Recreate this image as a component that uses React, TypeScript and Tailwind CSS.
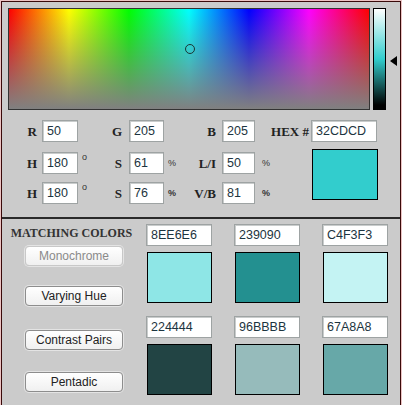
import React from 'react';

const serif = "font-['Liberation_Serif',serif] font-bold text-[13px] text-[#222]";
const sans = "font-['Liberation_Sans',Arial,sans-serif]";

function Field({ value, w }: { value: string; w: string }) {
    return (
        <div
            className={`${w} h-[22px] bg-white border border-[#9ea3a3] shadow-[inset_1px_1px_0_#c9cccc] flex items-center pl-[4px] ${sans} text-[12.5px] text-[#1c3440] leading-none`}
        >
            {value}
        </div>
    );
}

function Label({ text, w, pr = 'pr-[5px]' }: { text: string; w: string; pr?: string }) {
    return <div className={`${w} ${pr} text-right ${serif} leading-none`}>{text}</div>;
}

function Unit({ text, bold, sup }: { text: string; bold?: boolean; sup?: boolean }) {
    return (
        <div className="w-[20px] self-stretch flex">
            <span
                className={`pl-[4px] ${sans} ${sup ? 'text-[9px] mt-[1px]' : 'text-[9px] self-center'} ${bold ? 'font-bold' : ''} text-[#333] leading-none`}
            >
                {text}
            </span>
        </div>
    );
}

function Btn({ label, disabled, mt }: { label: string; disabled?: boolean; mt: string }) {
    return (
        <button
            className={`${mt} w-[98px] h-[20px] rounded-[4px] border ${disabled ? 'border-[#c8c8c8] text-[#8a8a8a]' : 'border-[#8d8d8d] text-[#222]'} bg-[linear-gradient(to_bottom,#ffffff,#f0f0f0)] shadow-[0_0_0_1px_#e4e4e4] ${sans} text-[12px] leading-none`}
        >
            {label}
        </button>
    );
}

function Swatch({ hex }: { hex: string }) {
    return (
        <div className="flex flex-col gap-[6px]">
            <Field value={hex} w="w-[66px]" />
            <div className="w-[65px] h-[51px] ml-[1px] border border-black" style={{ backgroundColor: `#${hex}` }} />
        </div>
    );
}

export default function App() {
    return (
        <div className="w-[402px] h-[405px] border-l border-t border-r border-[#ecc4c4] overflow-hidden">
            <div className="w-full h-full border-l border-t border-r border-[#3a0a0a] bg-[#cbcbcb]">
                {/* Picker */}
                <div className="flex pl-[6px] pt-[6px] gap-[3px]">
                    <div className="relative w-[362px] h-[102px] border border-[#333] bg-[linear-gradient(to_bottom,rgba(128,128,128,0),#808080),linear-gradient(to_right,#f00,#ff0,#0f0,#0ff,#00f,#f0f,#f00)]">
                        <div className="absolute left-[176px] top-[35px] w-[10px] h-[10px] rounded-full border-[1.5px] border-[#1b3535]" />
                    </div>
                    <div className="w-[13px] h-[102px] border border-black bg-[linear-gradient(to_bottom,#fff,#32cdcd_50%,#000_96%)]" />
                    <svg width="7" height="10" viewBox="0 0 7 10" className="mt-[48px] ml-[1px]">
                        <polygon points="7,0 7,10 0,5" fill="#000" />
                    </svg>
                </div>

                {/* Values */}
                <div className="flex items-center mt-[10px] h-[22px]">
                    <Label text="R" w="w-[40px]" />
                    <Field value="50" w="w-[36px]" />
                    <div className="w-[20px]" />
                    <Label text="G" w="w-[31px]" pr="pr-[7px]" />
                    <Field value="205" w="w-[35px]" />
                    <div className="w-[20px]" />
                    <Label text="B" w="w-[38px]" pr="pr-[6px]" />
                    <Field value="205" w="w-[33px]" />
                    <Label text="HEX #" w="w-[56px]" pr="pr-[2px]" />
                    <Field value="32CDCD" w="w-[66px]" />
                </div>

                <div className="flex mt-[7px]">
                    <div className="flex flex-col pt-[3px] gap-[8px] w-[310px]">
                        <div className="flex items-center h-[22px]">
                            <Label text="H" w="w-[40px]" />
                            <Field value="180" w="w-[36px]" />
                            <Unit text="o" sup />
                            <Label text="S" w="w-[31px]" pr="pr-[7px]" />
                            <Field value="61" w="w-[35px]" />
                            <Unit text="%" />
                            <Label text="L/I" w="w-[38px]" pr="pr-[6px]" />
                            <Field value="50" w="w-[33px]" />
                            <div className="w-[20px] self-stretch flex">
                                <span className={`pl-[7px] self-center ${sans} text-[9px] text-[#333] leading-none`}>%</span>
                            </div>
                        </div>
                        <div className="flex items-center h-[22px]">
                            <Label text="H" w="w-[40px]" />
                            <Field value="180" w="w-[36px]" />
                            <Unit text="o" sup />
                            <Label text="S" w="w-[31px]" pr="pr-[7px]" />
                            <Field value="76" w="w-[35px]" />
                            <Unit text="%" bold />
                            <Label text="V/B" w="w-[38px]" pr="pr-[6px]" />
                            <Field value="81" w="w-[33px]" />
                            <div className="w-[20px] self-stretch flex">
                                <span className={`pl-[7px] self-center ${sans} font-bold text-[9px] text-[#333] leading-none`}>%</span>
                            </div>
                        </div>
                    </div>
                    <div className="w-[66px] h-[51px] border border-black bg-[#32cdcd]" />
                </div>

                {/* Divider */}
                <div className="mt-[13px] h-[2px] bg-[#2a2a2a]" />

                {/* Matching colors */}
                <div className="flex">
                    <div className="w-[144px] flex flex-col items-center">
                        <div className="mt-[8px] ml-[-5px] font-['Liberation_Serif',serif] font-bold text-[12px] text-[#333] leading-none whitespace-nowrap">
                            MATCHING COLORS
                        </div>
                        <Btn label="Monochrome" disabled mt="mt-[7px]" />
                        <Btn label="Varying Hue" mt="mt-[20px]" />
                        <Btn label="Contrast Pairs" mt="mt-[24px]" />
                        <Btn label="Pentadic" mt="mt-[22px]" />
                    </div>
                    <div className="flex flex-col pt-[5px] gap-[13px]">
                        <div className="flex gap-[22px]">
                            <Swatch hex="8EE6E6" />
                            <Swatch hex="239090" />
                            <Swatch hex="C4F3F3" />
                        </div>
                        <div className="flex gap-[22px]">
                            <Swatch hex="224444" />
                            <Swatch hex="96BBBB" />
                            <Swatch hex="67A8A8" />
                        </div>
                    </div>
                </div>
            </div>
        </div>
    );
}
